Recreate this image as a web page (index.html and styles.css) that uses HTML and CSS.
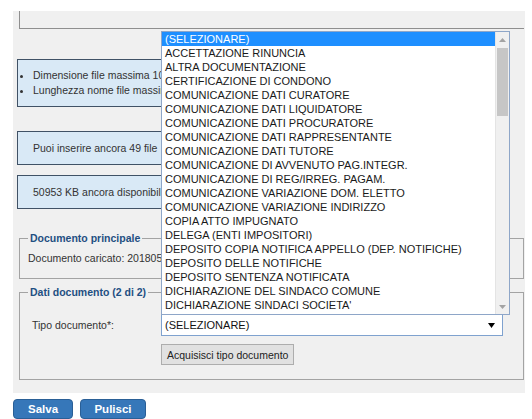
FILE: index.html
```html
<!DOCTYPE html>
<html lang="it">
<head>
<meta charset="utf-8">
<title>Deposito documenti</title>
<link rel="stylesheet" href="styles.css">
</head>
<body>
<div class="panel">
  <div class="top-box"></div>

  <div class="info info-list">
    <ul>
      <li>Dimensione file massima 10 MB</li>
      <li>Lunghezza nome file massima 100 caratteri</li>
    </ul>
  </div>

  <div class="info info-msg first">Puoi inserire ancora 49 file</div>
  <div class="info info-msg second">50953 KB ancora disponibili</div>

  <fieldset class="fs fs-main">
    <legend>Documento principale</legend>
    <p class="loaded">Documento caricato: 20180516_ricorso.pdf</p>
  </fieldset>

  <fieldset class="fs fs-data">
    <legend>Dati documento (2 di 2)</legend>
    <div class="row">
      <label class="label">Tipo documento*:</label>
      <div class="select">
        <span class="select-value">(SELEZIONARE)</span>
        <svg class="select-arrow" width="7" height="5" viewBox="0 0 7 5"><path d="M0 0H7L3.5 5Z" fill="#000"/></svg>

        <div class="popup">
          <ul class="options">
            <li class="selected">(SELEZIONARE)</li>
            <li>ACCETTAZIONE RINUNCIA</li>
            <li>ALTRA DOCUMENTAZIONE</li>
            <li>CERTIFICAZIONE DI CONDONO</li>
            <li>COMUNICAZIONE DATI CURATORE</li>
            <li>COMUNICAZIONE DATI LIQUIDATORE</li>
            <li>COMUNICAZIONE DATI PROCURATORE</li>
            <li>COMUNICAZIONE DATI RAPPRESENTANTE</li>
            <li>COMUNICAZIONE DATI TUTORE</li>
            <li>COMUNICAZIONE DI AVVENUTO PAG.INTEGR.</li>
            <li>COMUNICAZIONE DI REG/IRREG. PAGAM.</li>
            <li>COMUNICAZIONE VARIAZIONE DOM. ELETTO</li>
            <li>COMUNICAZIONE VARIAZIONE INDIRIZZO</li>
            <li>COPIA ATTO IMPUGNATO</li>
            <li>DELEGA (ENTI IMPOSITORI)</li>
            <li>DEPOSITO COPIA NOTIFICA APPELLO (DEP. NOTIFICHE)</li>
            <li>DEPOSITO DELLE NOTIFICHE</li>
            <li>DEPOSITO SENTENZA NOTIFICATA</li>
            <li>DICHIARAZIONE DEL SINDACO COMUNE</li>
            <li>DICHIARAZIONE SINDACI SOCIETA'</li>
          </ul>
          <div class="scrollbar">
            <div class="sb-arrow"><svg width="7" height="4" viewBox="0 0 7 4"><path d="M0 4H7L3.5 0Z" fill="#a3a3a3"/></svg></div>
            <div class="sb-track"><div class="sb-thumb"></div></div>
            <div class="sb-arrow"><svg width="7" height="4" viewBox="0 0 7 4"><path d="M0 0H7L3.5 4Z" fill="#a3a3a3"/></svg></div>
          </div>
        </div>
      </div>
    </div>
    <div class="row actions">
      <button class="btn-plain" type="button">Acquisisci tipo documento</button>
    </div>
  </fieldset>
</div>

<div class="buttons">
  <button class="btn-blue salva" type="button">Salva</button>
  <button class="btn-blue pulisci" type="button">Pulisci</button>
</div>
</body>
</html>
```

FILE: styles.css
```css
* {
  box-sizing: border-box;
}

body {
  margin: 0;
  background: #fff;
  font-family: "Liberation Sans", Arial, sans-serif;
  font-size: 10.5px;
  color: #333;
}

/* grey form container */
.panel {
  margin: 11px 0 0 13px;
  width: 512px;
  background: #f0f0f0;
  padding: 0 1px 13px 6px;
}

.top-box {
  height: 18px;
  border-left: 1px solid #8f8f8f;
  border-bottom: 1px solid #8f8f8f;
}

/* light blue notice boxes */
.info {
  margin-left: -2px;
  width: 440px;
  background: #d9e9f6;
  border: 1px solid #405266;
}

.info-list {
  margin-top: 30px;
  height: 48px;
  padding-top: 8px;
}

.info-list ul {
  margin: 0;
  padding-left: 15px;
  list-style: disc;
}

.info-list li {
  line-height: 15px;
}

.info-msg {
  height: 34px;
  display: flex;
  align-items: center;
  padding-left: 15px;
}

.info-msg.first {
  margin-top: 24px;
}

.info-msg.second {
  margin-top: 10px;
}

/* fieldsets */
.fs {
  margin: 0;
  min-width: 0;
  border: 1px solid #a3a3a3;
  padding: 0 8px;
}

.fs legend {
  padding: 0 2px;
  color: #1f4f82;
  font-weight: bold;
  line-height: 12px;
}

.fs-main {
  margin-top: 23px;
}

.loaded {
  margin: 8px 0 14px;
  line-height: 12px;
}

.fs-data {
  margin-top: 7px;
  padding-bottom: 14px;
}

.row {
  display: flex;
  align-items: center;
}

.row:first-of-type {
  margin-top: 16px;
  padding-left: 4px;
}

.label {
  width: 129px;
}

/* closed select */
.select {
  position: relative;
  width: 342px;
  height: 22px;
  background: #fff;
  border: 1px solid #7fa2cf;
  display: flex;
  align-items: center;
  padding-left: 3px;
  font-size: 11px;
  color: #111;
}

.select-value {
  flex: 1;
}

.select-arrow {
  margin-right: 7px;
}

/* open option list above the select */
.popup {
  position: absolute;
  left: -1px;
  bottom: 100%;
  width: 349px;
  display: flex;
  background: #fff;
  border: 1px solid #8ea6c8;
  padding-bottom: 2px;
}

.options {
  flex: 1;
  margin: 0;
  padding: 0;
  list-style: none;
}

.options li {
  height: 14px;
  line-height: 14px;
  padding-left: 3px;
  white-space: nowrap;
  color: #1a1a1a;
}

.options li.selected {
  background: #1e8fff;
  color: #fff;
}

.scrollbar {
  width: 14px;
  display: flex;
  flex-direction: column;
  background: #f0f0f0;
  border-left: 1px solid #e4e4e4;
  margin-bottom: -2px;
}

.sb-arrow {
  height: 15px;
  display: flex;
  align-items: center;
  justify-content: center;
}

.sb-track {
  flex: 1;
  padding: 1px 1px 0 1px;
}

.sb-thumb {
  height: 68px;
  background: #c6c6c6;
}

.actions {
  margin-top: 8px;
  padding-left: 133px;
}

.btn-plain {
  height: 21px;
  padding: 0 5px;
  font-family: inherit;
  font-size: 10.5px;
  color: #222;
  background: #e1e1e1;
  border: 1px solid #adadad;
  border-radius: 0;
}

/* bottom action buttons */
.buttons {
  display: flex;
  gap: 7px;
  margin: 6px 0 0 13px;
}

.btn-blue {
  height: 20px;
  padding: 0;
  font-family: inherit;
  font-size: 11.5px;
  font-weight: bold;
  color: #fff;
  background: #3677b9;
  border: 1px solid #2a5f96;
  border-radius: 4px;
}

.salva {
  width: 60px;
}

.pulisci {
  width: 66px;
}
```
